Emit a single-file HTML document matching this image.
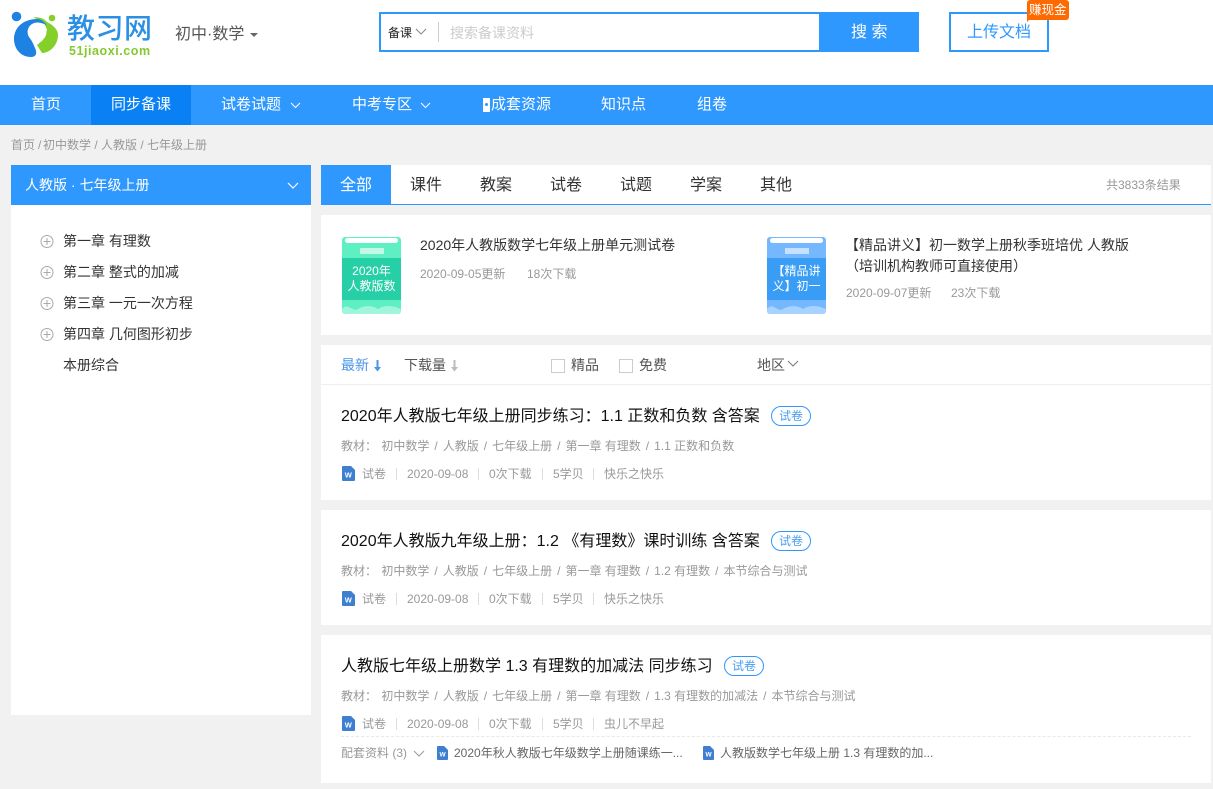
<!DOCTYPE html>
<html lang="zh"><head><meta charset="utf-8"><title>教习网</title>
<style>
*{margin:0;padding:0;box-sizing:border-box}
html,body{width:1213px;height:789px;overflow:hidden;background:#f1f1f1;font-family:"Liberation Sans","Noto Sans CJK SC",sans-serif;color:#333}
.a{position:absolute}
.t{position:absolute;white-space:pre;line-height:20px;font-size:14px}
.w{position:absolute;background:#fff}
.n{color:#fff;top:95px;font-size:15px}
.g{color:#999;font-size:12px}
.h{color:#111;font-size:16px}
.pill{position:absolute;width:40px;height:20px;border:1px solid #2e98ff;border-radius:10px;color:#4a9ff0;font-size:12px;line-height:19px;text-align:center}
.s{position:absolute;width:1px;height:12px;background:#ddd}
.g i{font-style:normal;margin:0 5px}
.c{font-family:"Liberation Sans","Noto Sans CJK TC",sans-serif}
</style></head><body>
<div class="w" style="left:0;top:0;width:1213px;height:85px"></div>
<svg class="a" style="left:10px;top:10px" width="50" height="50" viewBox="0 0 50 50">
<circle cx="6.500" cy="6.500" r="4.800" fill="#1e82e2"/><circle cx="42" cy="8" r="3.300" fill="#84cf2a"/>
<path d="M23 7.500C29 6.500 34 8.500 37 12C44 15.500 48 20 48 25C48 35 40 43 32 43L27 35L33 30L37 20L34 12Z" fill="#84cf2a"/>
<circle cx="27" cy="22" r="9.500" fill="#fff"/>
<path d="M27 9C14 9 4 17 4 29C4 39 11 47 21 47C27 47 27 42 25 38C23.500 34 22 31 20.300 28.700A9.500 9.500 0 0 1 27 12.500C31 12.500 34 13.500 37 16C34 11 31 9 27 9Z" fill="#1e82e2"/>
</svg>
<div class="t" style="left:67px;top:12px;font-size:28px;line-height:34px;font-weight:500;color:#2b8fe3;letter-spacing:.5px">教习网</div>
<div class="t" style="left:69px;top:43px;font-size:12.500px;line-height:16px;font-weight:700;color:#84c92f;letter-spacing:.55px">51jiaoxi.com</div>
<div class="t" style="left:175px;top:25px;color:#555;font-size:16px">初中·数学</div>
<div class="a" style="left:250px;top:33px;border-left:4px solid transparent;border-right:4px solid transparent;border-top:4px solid #666"></div>

<div class="a" style="left:379px;top:12px;width:540px;height:40px;border:2px solid #2e98ff;background:#fff"></div>
<div class="t" style="left:388px;top:23px;font-size:12px;color:#222">备课</div>
<svg class="a" style="left:415px;top:28px" width="12" height="8"><path d="M1 1L6 6L11 1" fill="none" stroke="#888"/></svg>
<div class="a" style="left:438px;top:22px;width:1px;height:20px;background:#ccc"></div>
<div class="t" style="left:450px;top:23px;font-size:14px;color:#ccc">搜索备课资料</div>
<div class="a" style="left:819px;top:12px;width:100px;height:40px;background:#2e98ff"></div>
<div class="t" style="left:851px;top:23px;color:#fff;font-size:16px">搜 索</div>
<div class="a" style="left:949px;top:12px;width:100px;height:40px;border:2px solid #2e98ff;background:#fff"></div>
<div class="t" style="left:967px;top:23px;color:#2e98ff;font-size:16px">上传文档</div>
<div class="a" style="left:1027px;top:0;width:42px;height:20px;background:#ff6a00;border-radius:3px"></div>
<div class="a" style="left:1027px;top:18px;border-top:4px solid #ff6a00;border-right:4px solid transparent"></div>
<div class="t" style="left:1029px;top:0;color:#fff;font-size:12.500px;line-height:20px">赚现金</div>

<div class="a" style="left:0;top:85px;width:1213px;height:40px;background:#2e98ff"></div>
<div class="a" style="left:91px;top:85px;width:100px;height:40px;background:#0a80f5"></div>
<div class="t n" style="left:31px">首页</div>
<div class="t n" style="left:111px">同步备课</div>
<div class="t n" style="left:221px">试卷试题</div>
<svg class="a" style="left:290px;top:102px" width="11" height="7"><path d="M1 1L5.500 5.500L10 1" fill="none" stroke="#fff"/></svg>
<div class="t n" style="left:352px">中考专区</div>
<svg class="a" style="left:420px;top:102px" width="11" height="7"><path d="M1 1L5.500 5.500L10 1" fill="none" stroke="#fff"/></svg>
<div class="a" style="left:483px;top:98px;width:7px;height:14px;background:#fff"></div>
<div class="a" style="left:485px;top:103px;width:3px;height:3px;border-radius:2px;background:#2e98ff"></div>
<div class="t n" style="left:491px">成套资源</div>
<div class="t n" style="left:601px">知识点</div>
<div class="t n" style="left:697px">组卷</div>

<div class="t g" style="left:11px;top:135px">首页</div>
<div class="t g" style="left:38px;top:135px">/</div>
<div class="t g" style="left:43px;top:135px">初中数学 / 人教版 / 七年级上册</div>

<div class="w" style="left:11px;top:165px;width:300px;height:550px"></div>
<div class="a" style="left:11px;top:165px;width:300px;height:40px;background:#2e98ff"></div>
<div class="t" style="left:25px;top:175px;color:#fff;font-size:14px">人教版 · 七年级上册</div>
<svg class="a" style="left:287px;top:182px" width="12" height="8"><path d="M1 1L6 6L11 1" fill="none" stroke="#fff" stroke-width="1.200"/></svg>
<svg class="a" style="left:40px;top:234px" width="14" height="110" fill="none" stroke="#aaa">
<circle cx="7" cy="7.500" r="6"/><path d="M3.500 7.500H10.500M7 4V11"/>
<circle cx="7" cy="38.500" r="6"/><path d="M3.500 38.500H10.500M7 35V42"/>
<circle cx="7" cy="69.500" r="6"/><path d="M3.500 69.500H10.500M7 66V73"/>
<circle cx="7" cy="100.500" r="6"/><path d="M3.500 100.500H10.500M7 97V104"/>
</svg>
<div class="t" style="left:63px;top:231px">第一章 有理数</div>
<div class="t" style="left:63px;top:262px">第二章 整式的加减</div>
<div class="t" style="left:63px;top:293px">第三章 一元一次方程</div>
<div class="t" style="left:63px;top:324px">第四章 几何图形初步</div>
<div class="t" style="left:63px;top:355px">本册综合</div>

<div class="w" style="left:321px;top:165px;width:890px;height:40px;border-bottom:1px solid #2e98ff"></div>
<div class="a" style="left:321px;top:165px;width:70px;height:40px;background:#2e98ff"></div>
<div class="t" style="left:340px;top:176px;font-size:16px;color:#fff">全部</div>
<div class="t" style="left:410px;top:176px;font-size:16px">课件</div>
<div class="t" style="left:480px;top:176px;font-size:16px">教案</div>
<div class="t" style="left:550px;top:176px;font-size:16px">试卷</div>
<div class="t" style="left:620px;top:176px;font-size:16px">试题</div>
<div class="t" style="left:690px;top:176px;font-size:16px">学案</div>
<div class="t" style="left:760px;top:176px;font-size:16px">其他</div>
<div class="t g" style="left:1106px;top:175px">共3833条结果</div>

<div class="w" style="left:321px;top:215px;width:890px;height:120px"></div>
<div class="a" style="left:342px;top:237px;width:59px;height:77px;background:#5ef0c2;border-radius:3px;overflow:hidden">
<div class="a" style="left:3px;top:1px;width:53px;height:5px;background:#fff;border-radius:3px"></div>
<div class="a" style="left:0;top:21px;width:59px;height:42px;background:#27cfa6"></div>
<div class="a" style="left:18px;top:11px;width:24px;height:6px;background:#c4f8e6"></div>
<svg class="a" style="left:0;top:0" width="59" height="77"><path d="M0 77V72C5 66 8 72 14 73C22 68 30 68 36 72C42 68 50 68 59 72V77Z" fill="#a0f5dc"/></svg>
</div>
<div class="t" style="left:342px;top:264px;width:59px;text-align:center;color:#fff;font-size:12px;line-height:15px">2020年
人教版数</div>
<div class="t" style="left:420px;top:235px">2020年人教版数学七年级上册单元测试卷</div>
<div class="t g" style="left:420px;top:264px">2020-09-05更新</div>
<div class="t g" style="left:527px;top:264px">18次下载</div>

<div class="a" style="left:767px;top:237px;width:59px;height:77px;background:#76b8ff;border-radius:3px;overflow:hidden">
<div class="a" style="left:3px;top:1px;width:53px;height:5px;background:#fff;border-radius:3px"></div>
<div class="a" style="left:0;top:21px;width:59px;height:42px;background:#3a9df5"></div>
<div class="a" style="left:18px;top:11px;width:24px;height:6px;background:#c6e0ff"></div>
<svg class="a" style="left:0;top:0" width="59" height="77"><path d="M0 77V72C5 66 8 72 14 73C22 68 30 68 36 72C42 68 50 68 59 72V77Z" fill="#a8d2ff"/></svg>
</div>
<div class="t" style="left:767px;top:264px;width:59px;text-align:center;color:#fff;font-size:12px;line-height:15px">【精品讲
义】初一</div>
<div class="t" style="left:845px;top:235px">【精品讲义】初一数学上册秋季班培优 人教版</div>
<div class="t" style="left:845px;top:256px">（培训机构教师可直接使用）</div>
<div class="t g" style="left:846px;top:283px">2020-09-07更新</div>
<div class="t g" style="left:951px;top:283px">23次下载</div>

<div class="w" style="left:321px;top:345px;width:890px;height:40px;border-bottom:1px solid #eee"></div>
<div class="t" style="left:341px;top:355px;color:#4a95e8">最新</div>
<svg class="a" style="left:373px;top:360px" width="9" height="12"><path d="M4.500 0V8" stroke="#4a95e8" stroke-width="2"/><path d="M1 7H8L4.500 11.500Z" fill="#4a95e8"/></svg>
<div class="t" style="left:404px;top:355px;color:#555">下载量</div>
<svg class="a" style="left:450px;top:360px" width="9" height="12"><path d="M4.500 0V8" stroke="#bbb" stroke-width="2"/><path d="M1 7H8L4.500 11.500Z" fill="#bbb"/></svg>
<div class="a" style="left:551px;top:359px;width:14px;height:14px;border:1px solid #ccc"></div>
<div class="t" style="left:571px;top:355px;color:#555">精品</div>
<div class="a" style="left:619px;top:359px;width:14px;height:14px;border:1px solid #ccc"></div>
<div class="t" style="left:639px;top:355px;color:#555">免费</div>
<div class="t" style="left:757px;top:355px;color:#555">地区</div>
<svg class="a" style="left:787px;top:360px" width="12" height="8"><path d="M1 1L6 6L11 1" fill="none" stroke="#777"/></svg>

<div class="w" style="left:321px;top:385px;width:890px;height:115px"></div>
<div class="t h" style="left:341px;top:407px">2020年人教版七年级上册同步练习<span class="c">：</span>1.1 正数和负数 含答案</div>
<div class="pill" style="left:771px;top:406px">试卷</div>
<div class="t g" style="left:341px;top:436px">教材<span class="c">：</span> <span style="margin-left:1px">初中数学</span><i>/</i>人教版<i>/</i>七年级上册<i>/</i>第一章 有理数<i>/</i>1.1 正数和负数</div>
<svg class="a" style="left:342px;top:466px" width="13" height="15"><path d="M0 1Q0 0 1 0H9L13 4V14Q13 15 12 15H1Q0 15 0 14Z" fill="#3f7fd0"/><text x="2.800" y="11.500" font-size="7.500" font-weight="700" fill="#fff" font-family="Liberation Sans">W</text></svg>
<div class="t g" style="left:362px;top:464px">试卷</div><div class="s" style="left:396px;top:468px"></div>
<div class="t g" style="left:407px;top:464px">2020-09-08</div><div class="s" style="left:478px;top:468px"></div>
<div class="t g" style="left:489px;top:464px">0次下载</div><div class="s" style="left:542px;top:468px"></div>
<div class="t g" style="left:553px;top:464px">5学贝</div><div class="s" style="left:593px;top:468px"></div>
<div class="t g" style="left:604px;top:464px">快乐之快乐</div>

<div class="w" style="left:321px;top:510px;width:890px;height:115px"></div>
<div class="t h" style="left:341px;top:532px">2020年人教版九年级上册<span class="c">：</span>1.2 《有理数》课时训练 含答案</div>
<div class="pill" style="left:771px;top:531px">试卷</div>
<div class="t g" style="left:341px;top:561px">教材<span class="c">：</span> <span style="margin-left:1px">初中数学</span><i>/</i>人教版<i>/</i>七年级上册<i>/</i>第一章 有理数<i>/</i>1.2 有理数<i>/</i>本节综合与测试</div>
<svg class="a" style="left:342px;top:591px" width="13" height="15"><path d="M0 1Q0 0 1 0H9L13 4V14Q13 15 12 15H1Q0 15 0 14Z" fill="#3f7fd0"/><text x="2.800" y="11.500" font-size="7.500" font-weight="700" fill="#fff" font-family="Liberation Sans">W</text></svg>
<div class="t g" style="left:362px;top:589px">试卷</div><div class="s" style="left:396px;top:593px"></div>
<div class="t g" style="left:407px;top:589px">2020-09-08</div><div class="s" style="left:478px;top:593px"></div>
<div class="t g" style="left:489px;top:589px">0次下载</div><div class="s" style="left:542px;top:593px"></div>
<div class="t g" style="left:553px;top:589px">5学贝</div><div class="s" style="left:593px;top:593px"></div>
<div class="t g" style="left:604px;top:589px">快乐之快乐</div>

<div class="w" style="left:321px;top:635px;width:890px;height:148px"></div>
<div class="t h" style="left:341px;top:657px">人教版七年级上册数学 1.3 有理数的加减法 同步练习</div>
<div class="pill" style="left:724px;top:656px">试卷</div>
<div class="t g" style="left:341px;top:686px">教材<span class="c">：</span> <span style="margin-left:1px">初中数学</span><i>/</i>人教版<i>/</i>七年级上册<i>/</i>第一章 有理数<i>/</i>1.3 有理数的加减法<i>/</i>本节综合与测试</div>
<svg class="a" style="left:342px;top:716px" width="13" height="15"><path d="M0 1Q0 0 1 0H9L13 4V14Q13 15 12 15H1Q0 15 0 14Z" fill="#3f7fd0"/><text x="2.800" y="11.500" font-size="7.500" font-weight="700" fill="#fff" font-family="Liberation Sans">W</text></svg>
<div class="t g" style="left:362px;top:714px">试卷</div><div class="s" style="left:396px;top:718px"></div>
<div class="t g" style="left:407px;top:714px">2020-09-08</div><div class="s" style="left:478px;top:718px"></div>
<div class="t g" style="left:489px;top:714px">0次下载</div><div class="s" style="left:542px;top:718px"></div>
<div class="t g" style="left:553px;top:714px">5学贝</div><div class="s" style="left:593px;top:718px"></div>
<div class="t g" style="left:604px;top:714px">虫儿不早起</div>
<div class="a" style="left:341px;top:736px;width:850px;border-top:1px dashed #e8e8e8"></div>
<div class="t g" style="left:341px;top:743px">配套资料 (3)</div>
<svg class="a" style="left:413px;top:750px" width="12" height="8"><path d="M1 1L6 6L11 1" fill="none" stroke="#999"/></svg>
<svg class="a" style="left:437px;top:746px" width="11" height="14"><path d="M0 1Q0 0 1 0H7L11 4V13Q11 14 10 14H1Q0 14 0 13Z" fill="#3f7fd0"/><text x="2.500" y="10.500" font-size="6.500" font-weight="700" fill="#fff" font-family="Liberation Sans">W</text></svg>
<div class="t" style="left:454px;top:743px;font-size:12px;color:#666">2020年秋人教版七年级数学上册随课练一...</div>
<svg class="a" style="left:703px;top:746px" width="11" height="14"><path d="M0 1Q0 0 1 0H7L11 4V13Q11 14 10 14H1Q0 14 0 13Z" fill="#3f7fd0"/><text x="2.500" y="10.500" font-size="6.500" font-weight="700" fill="#fff" font-family="Liberation Sans">W</text></svg>
<div class="t" style="left:720px;top:743px;font-size:12px;color:#666">人教版数学七年级上册 1.3 有理数的加...</div>
</body></html>
